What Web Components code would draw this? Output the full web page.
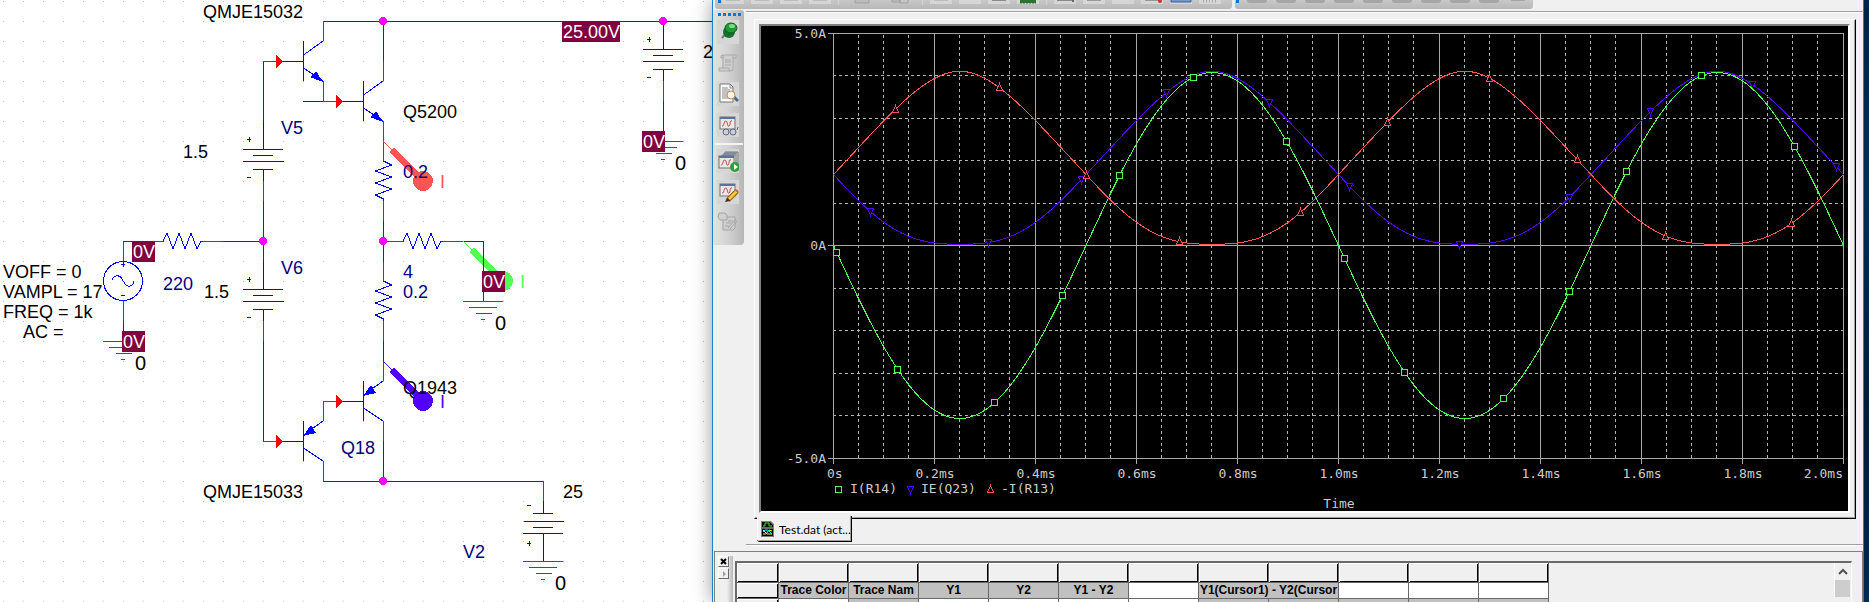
<!DOCTYPE html>
<html lang="en">
<head>
<meta charset="utf-8">
<title>Test.dat</title>
<style>
    html, body {
        margin: 0;
        height: 100%;
        background: #fff;
        font-family: "Liberation Sans", Arial, sans-serif;
        overflow: hidden;
    }
</style>
</head>
<body>
<app-desktop>
    <schematic-page></schematic-page>
    <probe-window slot="window">
        <top-toolbars slot="toolbars"></top-toolbars>
        <side-toolbar slot="side"></side-toolbar>
        <plot-document label="Test.dat (act...">
            <wave-plot></wave-plot>
        </plot-document>
        <cursor-dock slot="dock"></cursor-dock>
    </probe-window>
</app-desktop>

<script>
class AppDesktop extends HTMLElement {
    connectedCallback() {
        this.attachShadow({ mode: 'open' });
        this.shadowRoot.innerHTML = `
            <style>
                :host {
                    display: grid;
                    grid-template-columns: minmax(0, 712fr) minmax(0, 1152fr) 5px;
                    height: 100vh;
                    overflow: hidden;
                }

                .wallpaper {
                    background: linear-gradient(#002a50, #003866 30%, #002346 70%, #00305c);
                }
            </style>
            <slot></slot>
            <slot name="window"></slot>
            <div class="wallpaper"></div>
        `;
    }
}

class SchematicPage extends HTMLElement {
    connectedCallback() {
        this.attachShadow({ mode: 'open' });
        this.shadowRoot.innerHTML = `
            <style>
                :host {
                    display: block;
                    min-width: 0;
                    overflow: hidden;
                    background: #fff;
                }

                svg { display: block; width: 100%; height: 100%; }
                .wire { stroke: #800040; fill: none; }
                .pin { stroke: #f00; fill: none; }
                .part { stroke: #00f; fill: none; }
                .arrow { fill: #00f; }
                .base { fill: #f00; }
                .joint { fill: #f0f; }
                .bias { fill: #800040; }
                text { font-size: 18px; fill: #000; }
                .ref { fill: #000080; }
                .gnd { font-size: 20px; }
                .volt { fill: #fff; }
            </style>
            <svg shape-rendering="crispEdges">
                <defs>
                    <pattern id="dots" x="3" y="1" width="20" height="20" patternUnits="userSpaceOnUse">
                        <rect width="1" height="1" fill="#c0c0c0"/>
                    </pattern>
                    <g id="cell">
                        <path class="part" d="M.5 0V28M-20 28.5H20M-10 34.5H10M-20 40.5H21M-10 48.5H10M.5 48V60M-16 18.5H-12M-13.5 16V21M-16 56.5H-12"/>
                    </g>
                    <g id="ground">
                        <path class="pin" d="M-20 .5H20M-14 6.5H14M-7 12.5H9M-2 18.5H2"/>
                    </g>
                    <g id="res">
                        <path class="part" d="M.5 0L8.5 4L-7.5 10L8.5 16L-7.5 22L8.5 28L-7.5 34L.5 38V40"/>
                    </g>
                    <g id="npn">
                        <path class="base" d="M-27 -6L-20 0L-27 7Z"/>
                        <path class="part" d="M-20 .5H0M.5 -20V20M.5 -6L20 -20M.5 7L20 20"/>
                        <path class="arrow" d="M20 21L7 16L13 10Z"/>
                    </g>
                    <g id="pnp">
                        <path class="base" d="M-27 -6L-20 0L-27 7Z"/>
                        <path class="part" d="M-20 .5H0M.5 -20V20M.5 -6L20 -20M.5 7L20 20"/>
                        <path class="arrow" d="M0 -5L8 -16L13 -8Z"/>
                    </g>
                    <g id="probe">
                        <path d="M0 0L10 10" stroke="currentColor"/>
                        <path d="M9 9L34 34" stroke="currentColor" stroke-width="6"/>
                        <circle cx="40" cy="40" r="10" fill="currentColor"/>
                    </g>
                </defs>
                <rect width="100%" height="100%" fill="url(#dots)"/>

                <!-- nets -->
                <path class="wire" d="M323 21.5H760M303 101.5H323M263.5 61V121M263.5 201V262M263.5 341V441M383.5 21V61M383.5 221V262M383.5 341V361M383.5 441V481M323 481.5H543M123 241.5H155M223 241.5H263M463 241.5H483.5V301M663.5 101V141M123.5 321V341"/>
                <path class="pin" d="M323.5 21V41M263 61.5H277M323.5 81V101M323 101.5H337M383.5 61V81M383.5 121V161M263.5 181V201M263.5 321V341M383.5 201V221M383.5 262V281M383.5 321V341M383.5 361V381M337 401.5H323.5V421M263 441.5H277M323.5 461V481M383.5 421V441M543.5 481V501M123.5 241V261M155 241.5H163M203 241.5H223M383 241.5H403M443 241.5H463M123.5 301V321M663.5 81V101"/>

                <!-- parts -->
                <use href="#npn" x="303" y="61"/>
                <use href="#npn" x="363" y="101"/>
                <use href="#pnp" x="363" y="401"/>
                <use href="#pnp" x="303" y="441"/>
                <use href="#cell" x="263" y="121"/>
                <use href="#cell" x="263" y="261"/>
                <use href="#cell" x="663" y="21"/>
                <path class="part" d="M543.5 501V513M533 513.5H553M524 521.5H564M533 527.5H553M523 533.5H563M543.5 533V561M527 505.5H531M527 543.5H531M529.5 541V546"/>
                <use href="#res" x="383" y="161"/>
                <use href="#res" x="383" y="281"/>
                <path class="part" d="M163 241.5L167 233L173 249L179 233L185 249L191 233L197 249L201 241.5H203"/>
                <path class="part" d="M403 241.5L407 233L413 249L419 233L425 249L431 233L437 249L441 241.5H443"/>
                <circle class="part" cx="123" cy="281" r="19.5"/>
                <path class="part" d="M112 280C114 275 119 274 122 279L125 284C128 288 134 286 134 281M121 264.5H125M123.5 262V267M121 295.5H125"/>
                <use href="#ground" x="123" y="341"/>
                <use href="#ground" x="483" y="301"/>
                <use href="#ground" x="663" y="141"/>
                <use href="#ground" x="543" y="561"/>

                <g class="joint">
                    <circle cx="383" cy="21" r="4"/>
                    <circle cx="663" cy="21" r="4"/>
                    <circle cx="263" cy="241" r="4"/>
                    <circle cx="383" cy="241" r="4"/>
                    <circle cx="383" cy="481" r="4"/>
                </g>

                <text x="203" y="18">QMJE15032</text>
                <text x="403" y="118">Q5200</text>
                <text x="183" y="158">1.5</text>
                <text x="204" y="298">1.5</text>
                <text x="203" y="498">QMJE15033</text>
                <text x="563" y="498">25</text>
                <text x="703" y="58">25</text>
                <text x="3" y="278">VOFF = 0</text>
                <text x="3" y="298">VAMPL = 17</text>
                <text x="3" y="318">FREQ = 1k</text>
                <text x="23" y="338">AC =</text>
                <text class="ref" x="281" y="134">V5</text>
                <text class="ref" x="281" y="274">V6</text>
                <text class="ref" x="163" y="290">220</text>
                <text class="ref" x="403" y="278">4</text>
                <text class="ref" x="403" y="298">0.2</text>
                <text class="ref" x="341" y="454">Q18</text>
                <text class="ref" x="463" y="558">V2</text>
                <text class="gnd" x="135" y="370">0</text>
                <text class="gnd" x="495" y="330">0</text>
                <text class="gnd" x="675" y="170">0</text>
                <text class="gnd" x="555" y="590">0</text>

                <use href="#probe" x="383" y="141" color="#ff5454"/>
                <use href="#probe" x="463" y="241" color="#54ff54"/>
                <use href="#probe" x="383" y="361" color="#5400ff"/>
                <path class="wire" d="M483.5 241V301"/>
                <text class="ref" x="403" y="178">0.2</text>
                <text x="403" y="394">Q1943</text>
                <text x="440" y="188" style="fill:#ff5454">I</text>
                <text x="520" y="288" style="fill:#54ff54">I</text>
                <text x="440" y="408" style="fill:#5400ff">I</text>

                <!-- bias voltages -->
                <rect class="bias" x="562" y="22" width="58" height="20"/>
                <text class="volt" x="563" y="38">25.00V</text>
                <rect class="bias" x="132" y="241" width="23" height="21"/>
                <text class="volt" x="133" y="258">0V</text>
                <rect class="bias" x="122" y="331" width="23" height="21"/>
                <text class="volt" x="123" y="348">0V</text>
                <rect class="bias" x="482" y="271" width="23" height="21"/>
                <text class="volt" x="483" y="288">0V</text>
                <rect class="bias" x="642" y="131" width="23" height="21"/>
                <text class="volt" x="643" y="148">0V</text>
            </svg>
        `;
    }
}

class ProbeWindow extends HTMLElement {
    connectedCallback() {
        this.attachShadow({ mode: 'open' });
        this.shadowRoot.innerHTML = `
            <style>
                :host {
                    display: flex;
                    flex-direction: column;
                    min-width: 0;
                    height: 100vh;
                    box-sizing: border-box;
                    border: solid #1a82cc;
                    border-width: 0 1px;
                    background: #f0f0f0;
                    box-shadow: 0 0 18px rgba(0, 0, 0, 0.4);
                    z-index: 1;
                }

                .work {
                    display: flex;
                    flex: 1;
                    gap: 2px;
                    min-height: 0;
                    padding-top: 1px;
                }

                .client {
                    display: flex;
                    flex: 1;
                    min-width: 0;
                    margin-top: 1px;
                    padding: 7px 7px 2px 8px;
                    border: solid #a0a0a0;
                    border-width: 1px 0;
                    box-shadow: inset 0 1px #fff, 0 1px #fff;
                }
            </style>
            <slot name="toolbars"></slot>
            <div class="work">
                <slot name="side"></slot>
                <div class="client"><slot></slot></div>
            </div>
            <slot name="dock"></slot>
        `;
    }
}

class TopToolbars extends HTMLElement {
    connectedCallback() {
        const tool = (glyph = '', cls = '') => `<button class="${cls}" type="button" aria-label="Tool"><svg width="22" height="5">${glyph}</svg></button>`;
        const faint = '<path d="M4 0H18V1H4Z" fill="#bdbdbd"/>';
        this.attachShadow({ mode: 'open' });
        this.shadowRoot.innerHTML = `
            <style>
                :host { display: flex; gap: 3px; height: 9px; padding-left: 2px; }

                .bar {
                    display: flex;
                    gap: 7px;
                    box-sizing: border-box;
                    height: 9px;
                    background: linear-gradient(#c8c8c8, #b8b8b8);
                    border-radius: 0 0 3px 3px;
                }

                .main { padding: 0 11px 0 3px; }
                .extra { padding: 0 4px 0 1px; }
                .sep { width: 1px; height: 5px; background: #d4d4d4; }

                button {
                    display: flex;
                    justify-content: center;
                    width: 22px;
                    height: 4px;
                    padding: 0;
                    border: 0;
                    background: #d6d6d6;
                }

                .wide { width: 31px; background: none; }
                .off { background: none; }
                .grip { width: 3px; height: 3px; background: #0078d7; }
                .main .grip { margin-right: -6px; }
            </style>
            <div class="bar main">
                <i class="grip"></i>
                ${tool(faint)}${tool(faint)}${tool(faint)}${tool(faint)}
                <i class="sep"></i>
                ${tool('<path d="M4 0V3H18V0" fill="#bbb" stroke="#a0a0a0"/>', 'wide')}${tool('<path d="M3 0H11V2H3ZM11 0V3H19V0" fill="none" stroke="#a0a0a0"/>', 'wide')}
                <i class="sep"></i>
                ${tool(faint)}${tool()}${tool('<path d="M4 0H18V1H4Z" fill="#8a8a8a"/>')}${tool('<path d="M3 0H19V3H3Z" fill="#23792a"/><path d="M3 3H19" stroke="#555" stroke-dasharray="2 1"/>')}
                <i class="sep"></i>
                ${tool('<path d="M3 0H18V1H3Z" fill="#888"/><circle cx="19" cy="1" r="1" fill="#444"/>')}${tool('<path d="M4 0H18V1H4Z" fill="#999"/>')}${tool()}${tool('<path d="M4 0H18V1H4Z" fill="#999"/><circle cx="19" cy="1" r="2" fill="#c33"/>')}${tool('<path d="M1 -1V2H21V-1" fill="#7595cf" stroke="#3f5e9d"/>')}${tool('<path d="M4 1H19" stroke="#aaa" stroke-width="3" stroke-dasharray="1 2"/>')}
            </div>
            <div class="bar extra">
                <i class="grip"></i>
                ${tool('<rect x="1" y="-4" width="20" height="7" rx="3" fill="#a6a6a6"/>', 'off').repeat(9)}
                ${tool('<path d="M4 0H18V1H4Z" fill="#a6a6a6"/>', 'off')}
            </div>
        `;
    }
}

class SideToolbar extends HTMLElement {
    connectedCallback() {
        const scope = `
            <rect x="3" y="4" width="15" height="12" fill="#e8e8e8" stroke="#747474"/>
            <path d="M3 5H18" stroke="#5c7395" stroke-width="2"/>
            <path d="M5 13C7 14 7 7 9 8S10 14 12 13S12 7 15 8" fill="none" stroke="#c13a3a"/>`;
        this.attachShadow({ mode: 'open' });
        this.shadowRoot.innerHTML = `
            <style>
                :host {
                    display: flex;
                    flex: 0 0 31px;
                    flex-direction: column;
                    align-self: flex-start;
                    gap: 7px;
                    box-sizing: border-box;
                    padding: 3px 0 10px 4px;
                    background: linear-gradient(90deg, #e2e2e2, #d2d2d2 50%, #b6b6b6);
                    border-radius: 2px 3px 4px 0;
                }

                .grip {
                    width: 23px;
                    height: 3px;
                    margin-left: 1px;
                    margin-bottom: -3px;
                    background: repeating-linear-gradient(90deg, #0078d7 0 3px, transparent 3px 5px);
                }

                .sep { height: 2px; margin: -1px 1px -3px -2px; background: #f4f4f4; }
                button { width: 22px; height: 24px; padding: 0; border: 0; background: #d6d6d6; }
                button:disabled { background: none; }
                svg { display: block; }
            </style>
            <div class="grip"></div>
            <button type="button" aria-label="Pin">
                <svg width="22" height="24">
                    <path d="M5 18L11 11" stroke="#777" stroke-width="2"/>
                    <ellipse cx="12" cy="12" rx="6" ry="6" fill="#12702a"/>
                    <ellipse cx="14" cy="8" rx="6" ry="5" fill="#1f9a35" stroke="#0e5c20"/>
                    <ellipse cx="15" cy="6" rx="3" ry="2" fill="#7fdc86"/>
                </svg>
            </button>
            <button type="button" aria-label="Log" disabled>
                <svg width="22" height="24" fill="none" stroke="#a9a9a9">
                    <path d="M6 4H19V7H16V18Q16 20 13 20H2V17H6Z" fill="#cfcfcf"/>
                    <path d="M6 4Q3 4 4 7H6M13 20Q12 20 12 17H6M16 7V4M8 9H14M8 11H14M8 14H14"/>
                </svg>
            </button>
            <button type="button" aria-label="View file">
                <svg width="22" height="24">
                    <path d="M3 2H13L16 5V20H3Z" fill="#fafafa" stroke="#777"/>
                    <path d="M13 2V6H16M5 6H11M5 8H13M5 10H13M5 12H11M5 14H11M5 16H12" fill="none" stroke="#888"/>
                    <path d="M17 15L21 19" stroke="#47689a" stroke-width="3"/>
                    <circle cx="14" cy="13" r="4" fill="#fff4e6" stroke="#c98a58"/>
                </svg>
            </button>
            <button type="button" aria-label="View results">
                <svg width="22" height="24">${scope}
                    <path d="M6 18L9 16M14 18H13M20 17L21 14" stroke="#666"/>
                    <circle cx="9" cy="19" r="3" fill="#c5d0e4" stroke="#667"/>
                    <circle cx="16" cy="19" r="3" fill="#c5d0e4" stroke="#667"/>
                </svg>
            </button>
            <div class="sep"></div>
            <button type="button" aria-label="Run">
                <svg width="22" height="24">
                    <path d="M8 3H21V15M6 5H19V17M4 7H17" fill="none" stroke="#777"/>
                    <path d="M7 4H20M5 6H18" stroke="#5c7395"/>
                    <g transform="translate(-1 3)">${scope}</g>
                    <circle cx="18" cy="18" r="5" fill="#2f9e3b"/>
                    <path d="M17 15V21L21 18Z" fill="#fff"/>
                </svg>
            </button>
            <button type="button" aria-label="Edit profile">
                <svg width="22" height="24">${scope}
                    <path d="M11 20L20 11" stroke="#8b5a12" stroke-width="5"/>
                    <path d="M12 19L20 11" stroke="#ffc83a" stroke-width="3"/>
                    <path d="M8 22L10 18L13 21Z" fill="#333"/>
                    <path d="M19 10L21 12" stroke="#d85a4a" stroke-width="2"/>
                </svg>
            </button>
            <button type="button" aria-label="Edit log" disabled>
                <svg width="22" height="24" fill="none" stroke="#a4a4a4">
                    <path d="M6 6H18V17L16 19H6Z" fill="#cfcfcf"/>
                    <path d="M2 2H8L10 4V9H3L1 6Z" fill="#cfcfcf"/>
                    <path d="M11 10H16M9 12H14M8 15H12M11 17L19 8M13 18L20 10"/>
                </svg>
            </button>
        `;
    }
}

class PlotDocument extends HTMLElement {
    connectedCallback() {
        this.attachShadow({ mode: 'open' });
        this.shadowRoot.innerHTML = `
            <style>
                :host {
                    display: flex;
                    flex: 1;
                    flex-direction: column;
                    min-width: 0;
                }

                .frame {
                    display: flex;
                    flex: 1;
                    min-height: 0;
                    padding: 4px 5px 5px 4px;
                    border: 1px solid;
                    border-color: #fff #000 #000 #fff;
                    box-shadow: inset -1px -1px #a0a0a0;
                }

                .well {
                    display: flex;
                    flex: 1;
                    min-width: 0;
                    border: 2px solid;
                    border-color: #808080 #fff #fff #808080;
                }

                .tabs { display: flex; height: 23px; padding-left: 3px; }

                button {
                    display: flex;
                    align-items: center;
                    gap: 4px;
                    box-sizing: border-box;
                    height: 26px;
                    margin-top: -3px;
                    padding: 1px 0 0 4px;
                    border: solid #000;
                    border-width: 0 1px 1px 0;
                    border-radius: 0 0 0 3px;
                    box-shadow: inset 1px 0 #fff, inset -1px -1px #a0a0a0;
                    background: #f0f0f0;
                    font: 12px Lato, "Liberation Sans", sans-serif;
                    color: #000;
                    white-space: nowrap;
                }
            </style>
            <div class="frame"><div class="well"><slot></slot></div></div>
            <div class="tabs">
                <button type="button">
                    <svg width="14" height="16">
                        <path d="M0 0H10L13 3V16H0Z" fill="#808080"/>
                        <path d="M1 1H9L12 4V15H1Z" fill="#000"/>
                        <path d="M2 5H4V2H8V5H11" fill="none" stroke="#0f0"/>
                        <path d="M1 7H12" stroke="#ccc"/>
                        <path d="M2 9L6 13H11M2 13H5L8 9L11 10" fill="none" stroke="#ff0"/>
                        <path d="M2 11L4 9H7L11 13" fill="none" stroke="#0ff"/>
                    </svg>
                    <span></span>
                </button>
            </div>
        `;
        this.shadowRoot.querySelector('span').textContent = this.getAttribute('label');
    }
}

// Plot of three currents over two periods, redrawn to the size of its box
class WavePlot extends HTMLElement {
    connectedCallback() {
        this.attachShadow({ mode: 'open' });
        this.shadowRoot.innerHTML = `
            <style>
                :host { display: block; flex: 1; min-width: 0; background: #000; overflow: hidden; }
                svg { display: block; width: 100%; height: 100%; }
                text { font: 13px "DejaVu Sans Mono", monospace; fill: #ccc; }
                .axis { stroke: #a8a8a8; fill: none; }
                .minor { stroke: #b4b4b4; fill: none; stroke-dasharray: 3 3; }
                .trace { fill: none; }
            </style>
            <svg shape-rendering="crispEdges"></svg>
        `;
        this.draw();
        new ResizeObserver(() => this.draw()).observe(this);
    }

    draw() {
        const w = this.clientWidth;
        const h = this.clientHeight;
        const left = 72;
        const top = 7;
        const right = w - 5;
        const bottom = h - 53;
        const stepX = (right - left) / 40;
        const unit = (bottom - top) / 10;
        const zero = Math.round((top + bottom) / 2 - 1);
        const px = v => Math.floor(v) + 0.5;

        let major = `M${left - 5} ${px(top)}H${right}M${left - 5} ${px(zero)}H${right}M${left - 5} ${px(bottom)}H${right}`;
        let minor = '';
        for (let i = 0; i <= 40; i++) {
            const x = px(left + i * stepX);
            if (i % 4 === 0) {
                major += `M${x} ${top}V${bottom + 6}`;
            } else {
                minor += `M${x} ${top + 2}V${bottom}`;
            }
        }
        for (let i = 1; i < 10; i++) {
            if (i !== 5) {
                minor += `M${left} ${px(top + i * unit)}H${right}`;
            }
        }

        // currents in amperes, t in milliseconds
        const drive = t => Math.sin(2 * Math.PI * t);
        const idle = s => 0.03 + 1.64 * Math.pow(1 - s, 1.245 + 0.1 * s);
        const half = s => s >= 0 ? idle(s) + 4.07 * s : idle(-s);
        const traces = [
            { color: '#5400ff', fn: t => half(-drive(t)), mark: 'down', at: [0.073, 0.307, 0.491, 0.659, 0.864, 1.022, 1.24, 1.457, 1.618, 1.82, 1.986] },
            { color: '#54ff54', fn: t => -4.07 * drive(t), mark: 'box', at: [0.006, 0.127, 0.319, 0.453, 0.566, 0.713, 0.897, 1.012, 1.131, 1.327, 1.457, 1.57, 1.719, 1.903] },
            { color: '#ff5454', fn: t => half(drive(t)), mark: 'up', at: [0.123, 0.329, 0.501, 0.685, 0.925, 1.097, 1.299, 1.473, 1.648, 1.897] }
        ];
        const glyph = {
            box: 'M-3 -3H3V3H-3Z',
            up: 'M0 -4L3 3H-3Z',
            down: 'M0 4L3 -3H-3Z'
        };
        const symbol = (mark, color, x, y) =>
            `<path d="${glyph[mark]}" transform="translate(${Math.round(x) + 0.5} ${Math.round(y) + 0.5})" fill="#000" stroke="${color}"/>`;

        let curves = '';
        for (const { color, fn, mark, at } of traces) {
            const y = t => zero + 0.5 - fn(t) * unit;
            let d = '';
            for (let i = 0; i <= 500; i++) {
                const t = i / 250;
                d += `${i ? 'L' : 'M'}${(left + 0.5 + t * stepX * 20).toFixed(2)} ${y(t).toFixed(2)}`;
            }
            curves += `<path class="trace" d="${d}" stroke="${color}"/>`;
            for (const t of at) {
                curves += symbol(mark, color, left + t * stepX * 20, y(t) - 0.5);
            }
        }

        let labels = `
            <text x="${left - 7}" y="${top + 5}" text-anchor="end">5.0A</text>
            <text x="${left - 7}" y="${zero + 5}" text-anchor="end">0A</text>
            <text x="${left - 7}" y="${bottom + 5}" text-anchor="end">-5.0A</text>
            <text x="${left - 6}" y="${bottom + 20}">0s</text>
            <text x="${right}" y="${bottom + 20}" text-anchor="end">2.0ms</text>
            <text x="${Math.round((left + right) / 2) + 1}" y="${h - 3}" text-anchor="middle">Time</text>
            <text x="89" y="${h - 18}">I(R14)</text>
            <text x="160" y="${h - 18}">IE(Q23)</text>
            <text x="240" y="${h - 18}">-I(R13)</text>`;
        for (let i = 1; i < 10; i++) {
            labels += `<text x="${Math.round(left + i * stepX * 4) + 1}" y="${bottom + 20}" text-anchor="middle">${(i / 5).toFixed(1)}ms</text>`;
        }

        this.shadowRoot.querySelector('svg').innerHTML = `
            <path class="minor" d="${minor}"/>
            <path class="axis" d="${major}"/>
            ${curves}
            ${labels}
            ${symbol('box', '#54ff54', 77, h - 22)}
            ${symbol('down', '#5400ff', 149, h - 22)}
            ${symbol('up', '#ff5454', 229, h - 22)}
        `;
    }
}

class CursorDock extends HTMLElement {
    connectedCallback() {
        this.attachShadow({ mode: 'open' });
        this.shadowRoot.innerHTML = `
            <style>
                :host {
                    display: flex;
                    flex: 0 0 51px;
                    box-sizing: border-box;
                    margin: 6px 0 0 1px;
                    padding: 4px 10px 0 3px;
                    border: solid #808080;
                    border-width: 1px 1px 0 1px;
                    overflow: hidden;
                }

                .grip {
                    display: flex;
                    flex: 0 0 15px;
                    flex-direction: column;
                    gap: 1px;
                    margin-right: 2px;
                    background: linear-gradient(90deg, #f0f0f0 60%, #b8b8b8);
                }

                .grip button {
                    width: 11px;
                    height: 11px;
                    padding: 0;
                    border: 1px solid;
                    border-color: #fff #696969 #696969 #fff;
                    background: #f0f0f0;
                }

                .grip svg { display: block; }

                .sheet {
                    display: flex;
                    flex: 1;
                    align-items: flex-start;
                    justify-content: space-between;
                    min-width: 0;
                    margin-top: 5px;
                    border: solid #696969;
                    border-width: 2px 1px 0 2px;
                    border-right-color: #fff;
                    overflow: hidden;
                }

                table { border-spacing: 0; table-layout: fixed; width: 812px; }
                col { width: 70px; }
                col.head { width: 42px; }

                th, td {
                    box-sizing: border-box;
                    height: 16px;
                    padding: 0;
                    border: solid #696969;
                    border-width: 0 1px 1px 0;
                    background: #fff;
                    font: bold 12px/15px "Liberation Sans", Arial, sans-serif;
                    text-align: center;
                    white-space: nowrap;
                    overflow: hidden;
                }

                .top th {
                    height: 20px;
                    background: #f0f0f0;
                    box-shadow: inset 1px 1px #fff, inset -1px -1px #000;
                }

                td.side { background: #f0f0f0; box-shadow: inset 1px 1px #fff, inset -1px -1px #000; }
                th.gray, td.gray { background: #c0c0c0; }

                .scroll { width: 16px; background: #f0f0f0; border-left: 1px solid #fff; }

                .scroll button {
                    display: block;
                    width: 16px;
                    height: 17px;
                    padding: 0;
                    border: 0;
                    background: none;
                }

                .thumb { width: 15px; height: 17px; background: #cdcdcd; }
            </style>
            <div class="grip">
                <button type="button" aria-label="Close"><svg width="9" height="9"><path d="M2 2L7 7M7 2L2 7" stroke="#000" stroke-width="2"/></svg></button>
                <button type="button" aria-label="Expand"><svg width="9" height="9"><path d="M4 2V8L7 5Z" fill="#a0a0a0"/></svg></button>
            </div>
            <div class="sheet">
                <table>
                    <colgroup><col class="head"><col span="11"></colgroup>
                    <tr class="top">${'<th></th>'.repeat(12)}</tr>
                    <tr>
                        <td class="side"></td>
                        <th class="gray">Trace Color</th>
                        <th class="gray">Trace Nam</th>
                        <th class="gray">Y1</th>
                        <th class="gray">Y2</th>
                        <th class="gray">Y1 - Y2</th>
                        <td></td>
                        <th class="gray" colspan="2">Y1(Cursor1) - Y2(Cursor</th>
                        <td></td>
                        <td></td>
                        <td></td>
                    </tr>
                    <tr>
                        <td class="side"></td>
                        <td></td>
                        <td class="gray"></td>
                        <td></td>
                        <td></td>
                        <td></td>
                        <td></td>
                        ${'<td class="gray"></td>'.repeat(5)}
                    </tr>
                </table>
                <div class="scroll">
                    <button type="button" aria-label="Scroll up"><svg width="16" height="17"><path d="M4 11L8 7L12 11" fill="none" stroke="#505050" stroke-width="2"/></svg></button>
                    <div class="thumb"></div>
                </div>
            </div>
        `;
    }
}

customElements.define('app-desktop', AppDesktop);
customElements.define('schematic-page', SchematicPage);
customElements.define('probe-window', ProbeWindow);
customElements.define('top-toolbars', TopToolbars);
customElements.define('side-toolbar', SideToolbar);
customElements.define('plot-document', PlotDocument);
customElements.define('wave-plot', WavePlot);
customElements.define('cursor-dock', CursorDock);
</script>
</body>
</html>
